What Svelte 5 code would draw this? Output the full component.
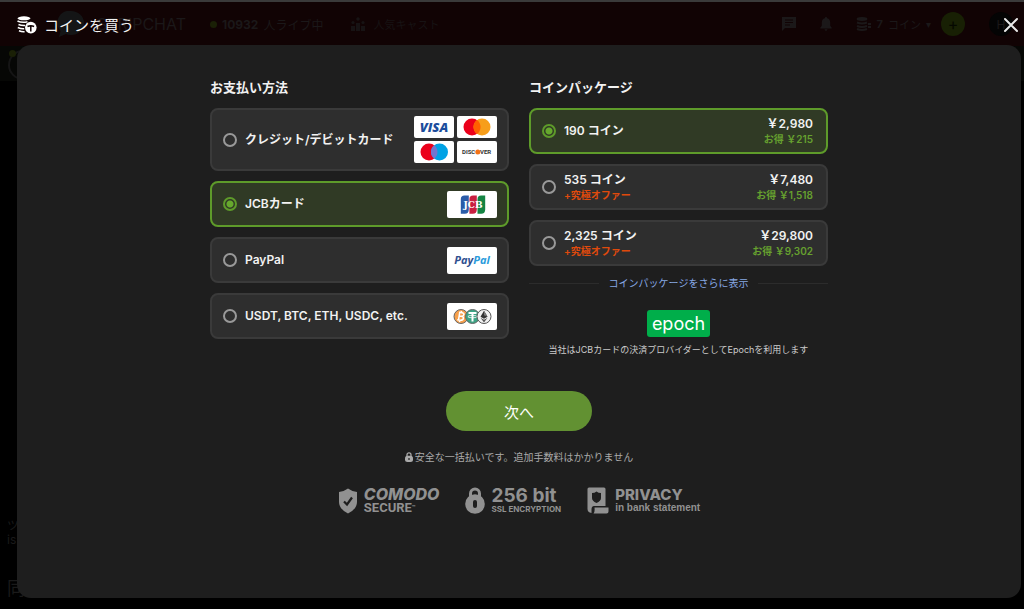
<script lang="ts">
  type Method = { id: string; label: string; logos: string[] };
  type Pack = { id: string; label: string; offer?: string; price: string; save: string };

  const methods: Method[] = [
    { id: "card", label: "クレジット/デビットカード", logos: ["visa", "mastercard", "maestro", "discover"] },
    { id: "jcb", label: "JCBカード", logos: ["jcb"] },
    { id: "paypal", label: "PayPal", logos: ["paypal"] },
    { id: "crypto", label: "USDT, BTC, ETH, USDC, etc.", logos: ["crypto"] },
  ];

  const packs: Pack[] = [
    { id: "190", label: "190 コイン", price: "￥2,980", save: "お得 ￥215" },
    { id: "535", label: "535 コイン", offer: "+究極オファー", price: "￥7,480", save: "お得 ￥1,518" },
    { id: "2325", label: "2,325 コイン", offer: "+究極オファー", price: "￥29,800", save: "お得 ￥9,302" },
  ];

  let method = $state("jcb");
  let pack = $state("190");
</script>

{#snippet logo(name: string)}
  {#if name === "visa"}
    <svg class="logo small" viewBox="0 0 40 22" role="img" aria-label="Visa">
      <text x="20" y="16" text-anchor="middle" class="visa">VISA</text>
    </svg>
  {:else if name === "mastercard"}
    <svg class="logo small" viewBox="0 0 40 22" role="img" aria-label="Mastercard">
      <circle cx="15" cy="11" r="8.5" fill="#eb001b" />
      <circle cx="25" cy="11" r="8.5" fill="#f79e1b" />
      <path d="M20 4.1a8.5 8.5 0 0 1 0 13.8a8.5 8.5 0 0 1 0-13.8z" fill="#ff5f00" />
    </svg>
  {:else if name === "maestro"}
    <svg class="logo small" viewBox="0 0 40 22" role="img" aria-label="Maestro">
      <circle cx="15" cy="11" r="8.5" fill="#eb001b" />
      <circle cx="25.5" cy="11" r="8.5" fill="#00a2e5" />
      <path d="M20.2 4.3a8.5 8.5 0 0 1 0 13.4a8.5 8.5 0 0 1 0-13.4z" fill="#7375cf" />
    </svg>
  {:else if name === "discover"}
    <svg class="logo small" viewBox="0 0 40 22" role="img" aria-label="Discover">
      <text x="5" y="13" class="discover">DISC</text>
      <circle cx="20.8" cy="11" r="2.5" fill="#f47216" />
      <text x="23" y="13" class="discover">VER</text>
    </svg>
  {:else if name === "jcb"}
    <svg class="logo" viewBox="0 0 50 27" role="img" aria-label="JCB">
      <path d="M17.5 4.5h4.3v14q0 4.2-4 4.2h-4v-14.500q0-3.700 3.700-3.700z" fill="#2a5ca8" />
      <path d="M26 4.5h3.800v14q0 4.2-4 4.2h-3.400v-14.500q0-3.700 3.600-3.700z" fill="#c81f40" />
      <path d="M34 4.5h4.200v14q0 4.2-4 4.2h-3.700v-14.500q0-3.700 3.500-3.700z" fill="#148443" />
      <text x="26" y="17" text-anchor="middle" class="jcb">JCB</text>
    </svg>
  {:else if name === "paypal"}
    <svg class="logo" viewBox="0 0 50 27" role="img" aria-label="PayPal">
      <text x="25" y="17" text-anchor="middle" class="paypal"
        ><tspan fill="#2f4f90">Pay</tspan><tspan fill="#2a9bdc">Pal</tspan></text>
    </svg>
  {:else}
    <svg class="logo" viewBox="0 0 50 27" role="img" aria-label="Bitcoin, Tether, Ethereum">
      <circle cx="14" cy="13.5" r="7" fill="#f7a04b" stroke="#666" />
      <path
        d="M12.8 9l-1.4 8.700M12 9.3l3.2.4q2 .4 1.7 2t-2.6 1.5l-2.2-.2M14.2 13.2q2.6.5 2.2 2.3t-3.2 1.7l-3-.4M14.5 7.8l-.3 1.7M12.8 17.3l-.3 1.9"
        fill="none" stroke="#fff" stroke-width="1.5" />
      <circle cx="25.5" cy="13.5" r="7" fill="#3ca384" stroke="#666" />
      <path d="M21.5 10h8M25.5 10v8.5" stroke="#fff" stroke-width="2" />
      <ellipse cx="25.5" cy="13.6" rx="4.6" ry="1.2" fill="none" stroke="#fff" stroke-width="0.8" />
      <circle cx="37" cy="13.5" r="7" fill="#f2f2f2" stroke="#555" />
      <path d="M37 7.8l-3.5 5.9l3.5 2l3.5-2z" fill="#333" />
      <path d="M33.5 14.7l3.5 4.7l3.5-4.7l-3.5 2z" fill="#555" />
      <path d="M37 7.8v4.5l3.5 1.4z" fill="#777" />
    </svg>
  {/if}
{/snippet}

<div class="page">
  <div class="site" aria-hidden="true">
    <div class="topbar">
      <svg class="brand-icon" viewBox="0 0 28 26">
        <path d="M14 0a13 12 0 0 1 0 24q-3 0-5-1l-7 3l1.500-6a12 12 0 0 1 10.500-20z" fill="#141516" />
      </svg>
      <span class="brand">STRIPCHAT</span>
      <span class="live"><i></i><b>10932</b> 人ライブ中</span>
      <span class="popular">
        <svg width="14" height="14" viewBox="0 0 14 14" fill="#171314">
          <path d="M0 9h4v5h-4zM5 6h4v8h-4zM10 9h4v5h-4z" />
          <circle cx="2" cy="5.5" r="1.6" /><circle cx="7" cy="2" r="1.8" /><circle cx="12" cy="5.5" r="1.6" />
        </svg>
        人気キャスト
      </span>
      <svg class="chat" width="14" height="14" viewBox="0 0 14 14">
        <path d="M0 0h14v11h-11l-3 3z" fill="#1b1819" />
        <path d="M3 3h8M3 5.5h8M3 8h5" stroke="#110304" />
      </svg>
      <svg class="bell" width="12" height="14" viewBox="0 0 12 14" fill="#1b1819">
        <path d="M6 0q1 0 1.2 1.2q3 .8 3 4.5v3l1.5 2v.8h-11.4v-.8l1.5-2v-3q0-3.7 3-4.5q.2-1.2 1.2-1.2zM4.5 12.3h3q-.3 1.5-1.5 1.5t-1.5-1.5z" />
      </svg>
      <span class="balance">
        <svg width="16" height="14" viewBox="0 0 16 14" fill="none" stroke="#1b1819" stroke-width="2">
          <path d="M1 2q5 2 10 0M1 2q5-2 10 0M1 5.5q5 2 10 0M1 9q5 2 10 0M1 12q5 2 10 0M12 7h3M12 10h3" />
        </svg>
        <b>7</b> コイン <small>▾</small>
      </span>
      <span class="add">+</span>
      <span class="avatar">H</span>
    </div>
    <div class="strip"><i class="online"></i><span class="ring"></span></div>
    <div class="below">
      <span>ツ</span>
      <span>is</span>
      <strong>同</strong>
    </div>
  </div>

  <div class="overlay">
    <header>
      <svg width="20" height="18" viewBox="0 0 20 18" fill="#fff" aria-hidden="true">
        <ellipse cx="7" cy="2.3" rx="6.5" ry="2" />
        <path d="M.5 5q4.5 2.2 10 .8" fill="none" stroke="#fff" stroke-width="1.5" />
        <path d="M1.5 8.5q3 1.3 6.5 1M.8 11.5q3 1.5 6.4 1.3M2 14.8q2.5 1.2 5.6 1" fill="none" stroke="#fff" stroke-width="1.5" />
        <circle cx="13.8" cy="11.6" r="5.8" />
        <path d="M10.5 10.5q3.3-1.6 6.6 0M13.8 10v5.5" fill="none" stroke="#110304" stroke-width="1.5" />
      </svg>
      <h1>コインを買う</h1>
      <button class="close" type="button" aria-label="閉じる">
        <svg width="16" height="16" viewBox="0 0 16 16" aria-hidden="true">
          <path d="M2 2l12 12M14 2l-12 12" stroke="#e8e8e8" stroke-width="2" stroke-linecap="round" />
        </svg>
      </button>
    </header>

    <main>
      <div class="columns">
        <section>
          <h2 id="methods">お支払い方法</h2>
          <div class="options" role="radiogroup" aria-labelledby="methods">
            {#each methods as m (m.id)}
              <label class="option" class:selected={method === m.id}>
                <input type="radio" name="method" value={m.id} bind:group={method} />
                <span class="name">{m.label}</span>
                <span class="logos" class:many={m.logos.length > 1}>
                  {#each m.logos as name}
                    {@render logo(name)}
                  {/each}
                </span>
              </label>
            {/each}
          </div>
        </section>

        <section>
          <h2 id="packs">コインパッケージ</h2>
          <div class="options" role="radiogroup" aria-labelledby="packs">
            {#each packs as p (p.id)}
              <label class="option" class:selected={pack === p.id}>
                <input type="radio" name="pack" value={p.id} bind:group={pack} />
                <span class="name">
                  {p.label}
                  {#if p.offer}<small class="offer">{p.offer}</small>{/if}
                </span>
                <span class="price">
                  {p.price}
                  <small class="save">{p.save}</small>
                </span>
              </label>
            {/each}
          </div>
          <div class="more"><a href="#packs">コインパッケージをさらに表示</a></div>
          <div class="provider">
            <span class="epoch">epoch</span>
            <p>当社はJCBカードの決済プロバイダーとしてEpochを利用します</p>
          </div>
        </section>
      </div>

      <button class="next" type="button">次へ</button>

      <p class="secure">
        <svg width="8" height="10" viewBox="0 0 8 10" aria-hidden="true">
          <path d="M2 5v-2.2a2 2 0 0 1 4 0v2.2" fill="none" stroke="#aaa" stroke-width="1.3" />
          <rect y="3.8" width="8" height="6.2" rx="2.5" fill="#aaa" />
          <path d="M4 6v2" stroke="#1e1e1e" stroke-width="1.2" />
        </svg>
        安全な一括払いです。追加手数料はかかりません
      </p>

      <ul class="badges">
        <li class="comodo">
          <svg width="20" height="26" viewBox="0 0 20 26" aria-hidden="true">
            <path d="M10 .5q4 3 9 3.5v10q0 7-9 11.5q-9-4.5-9-11.5v-10q5-.5 9-3.5z" fill="#919191" />
            <path d="M6 13.5l3 3l5-7" fill="none" stroke="#1e1e1e" stroke-width="2.2" />
          </svg>
          <div><b>COMODO</b><span>SECURE<sup>™</sup></span></div>
        </li>
        <li class="ssl">
          <svg width="20" height="27" viewBox="0 0 20 27" aria-hidden="true">
            <path d="M5.5 12v-5.500a4.5 4.5 0 0 1 9 0v5.500" fill="none" stroke="#919191" stroke-width="3" />
            <circle cx="10" cy="17" r="9.8" fill="#919191" />
            <rect x="8" y="13" width="4" height="8" rx="2" fill="#1e1e1e" />
          </svg>
          <div><b>256 bit</b><span>SSL ENCRYPTION</span></div>
        </li>
        <li class="privacy">
          <svg width="22" height="27" viewBox="0 0 22 27" aria-hidden="true">
            <path d="M2 .5h15q1.5 0 1.5 1.5v17h-11.5q-2.5 0-2.5 3.5v3.5q-4-.5-4-4v-20q0-1.500 1.500-1.500z" fill="#919191" />
            <path d="M9.500 4.500q2 1.500 4.500 1.500v5q0 3-4.500 5q-4.500-2-4.500-5v-5q2.500 0 4.500-1.500z" fill="#1e1e1e" />
            <path d="M7.500 20.500h14v4q0 2-2 2h-13q1.500-1 1-6z" fill="#919191" />
          </svg>
          <div><b>PRIVACY</b><span>in bank statement</span></div>
        </li>
      </ul>
    </main>
  </div>
</div>

<style>
  :global(body) {
    margin: 0;
    background: #000;
  }

  .page {
    display: grid;
    min-height: 100vh;
    font-family: Inter, "Noto Sans CJK JP", sans-serif;
    color: #f2f2f2;
  }

  .site,
  .overlay {
    grid-area: 1 / 1;
    min-width: 0;
    display: flex;
    flex-direction: column;
  }

  .site {
    color: #1b1819;
    font-size: 12px;
    overflow: hidden;
  }

  .topbar {
    display: flex;
    align-items: center;
    height: 44px;
    padding-left: 57px;
    border-top: 2px solid #3a3a3a;
    background: #110304;
    white-space: nowrap;
  }

  .brand-icon {
    width: 28px;
    height: 26px;
  }

  .brand {
    margin-left: 12px;
    font-size: 16px;
  }

  .live,
  .popular,
  .balance {
    display: flex;
    align-items: center;
    gap: 5px;
  }

  .live {
    margin-left: 24px;
  }

  .live i,
  .online {
    width: 7px;
    height: 7px;
    border-radius: 50%;
    background: #1a2006;
  }

  .popular {
    margin-left: 28px;
    gap: 8px;
    color: #171314;
    font-size: 11px;
  }

  .chat {
    margin-left: auto;
  }

  .bell {
    margin: 0 24px;
  }

  .balance {
    font-size: 11px;
  }

  .add,
  .avatar {
    display: grid;
    place-items: center;
    width: 24px;
    height: 24px;
    border-radius: 50%;
  }

  .add {
    margin: 0 24px 0 10px;
    background: #182004;
    color: #050800;
    font-size: 16px;
  }

  .avatar {
    margin-right: 11px;
    background: #040404;
  }

  .strip {
    position: relative;
    height: 35px;
    padding-left: 8px;
    background: #060705;
  }

  .online {
    position: absolute;
    top: 4px;
    left: 9px;
  }

  .ring {
    display: block;
    width: 26px;
    height: 26px;
    margin-top: 4px;
    border: 2px solid #151515;
    border-radius: 50%;
  }

  .below {
    display: flex;
    flex-direction: column;
    margin-top: auto;
    padding: 0 0 8px 7px;
    line-height: 14px;
    color: #1a1a1a;
  }

  .below strong {
    margin-top: 30px;
    font-size: 18px;
    font-weight: 400;
    line-height: 24px;
  }

  .overlay {
    position: relative;
    padding: 0 3px 11px 17px;
  }

  header {
    display: flex;
    align-items: center;
    gap: 7px;
    height: 45px;
    padding-top: 4px;
    box-sizing: border-box;
  }

  h1,
  h2,
  p {
    margin: 0;
  }

  h1 {
    font-size: 15px;
    font-weight: 400;
  }

  button {
    border: 0;
    font: inherit;
    cursor: pointer;
  }

  .close {
    display: grid;
    margin-left: auto;
    padding: 2px;
    background: none;
  }

  main {
    flex: 1;
    display: flex;
    flex-direction: column;
    align-items: center;
    padding: 32px 16px;
    border-radius: 14px;
    background: #1e1e1e;
  }

  .columns {
    display: grid;
    grid-template-columns: 1fr 1fr;
    gap: 20px;
    width: 100%;
    max-width: 618px;
  }

  h2 {
    margin-bottom: 11px;
    font-size: 13px;
    font-weight: 700;
    line-height: 20px;
  }

  .options {
    display: grid;
    gap: 10px;
  }

  .option {
    display: flex;
    align-items: center;
    gap: 8px;
    min-height: 46px;
    padding: 0 10px 0 11px;
    box-sizing: border-box;
    border: 2px solid #3a3a3a;
    border-radius: 8px;
    background: #2e2e2e;
    font-size: 12px;
    font-weight: 600;
    line-height: 16px;
    cursor: pointer;
  }

  .option.selected {
    border-color: #5e9b2a;
    background: #303a25;
  }

  input {
    appearance: none;
    flex: none;
    width: 14px;
    height: 14px;
    margin: 0;
    border: 2px solid #999;
    border-radius: 50%;
  }

  input:checked {
    border-color: #5e9b2a;
    background: radial-gradient(circle, #66a82d 3px, transparent 4px);
  }

  .name {
    flex: 1;
  }

  small {
    display: block;
    font-size: 10px;
    line-height: 14px;
  }

  .offer {
    color: #e04a0c;
  }

  .price {
    padding-right: 3px;
    text-align: right;
  }

  .save {
    color: #66a02f;
  }

  .logos {
    display: grid;
  }

  .logos.many {
    grid-template-columns: auto auto;
    gap: 3px;
    padding: 6px 0;
  }

  .logo {
    width: 50px;
    height: 27px;
    border-radius: 2px;
    background: #fff;
  }

  .logo.small {
    width: 40px;
    height: 22px;
  }

  .visa {
    font: italic 800 13px "Open Sans", sans-serif;
    fill: #1c4d9d;
  }

  .discover {
    font: 700 6px Roboto, sans-serif;
    fill: #333;
  }

  .jcb {
    font: 700 9px "DejaVu Serif", serif;
    fill: #fff;
  }

  .paypal {
    font: italic 700 11px "Open Sans", sans-serif;
  }

  .more {
    display: flex;
    align-items: center;
    gap: 10px;
    margin-top: 9px;
    font-size: 10px;
    line-height: 16px;
  }

  .more::before,
  .more::after {
    content: "";
    flex: 1;
    height: 1px;
    background: #2c2c2c;
  }

  .more a {
    color: #87a9e6;
    text-decoration: none;
  }

  .provider {
    display: flex;
    flex-direction: column;
    align-items: center;
    gap: 6px;
    margin-top: 19px;
    font-size: 9px;
    line-height: 14px;
    color: #ccc;
  }

  .epoch {
    padding: 0 5px;
    border-radius: 3px;
    background: #00ae4a;
    color: #fff;
    font-size: 18px;
    line-height: 27px;
  }

  .next {
    width: 146px;
    height: 40px;
    margin-top: 34px;
    border-radius: 20px;
    background: #629132;
    color: #fff;
    font-size: 15px;
  }

  .secure {
    display: flex;
    align-items: center;
    gap: 2px;
    margin-top: 18px;
    font-size: 10px;
    line-height: 16px;
    color: #aaa;
  }

  .badges {
    display: flex;
    flex-wrap: wrap;
    justify-content: center;
    gap: 26px;
    margin: 22px 0 0;
    padding: 0;
    list-style: none;
    color: #919191;
  }

  .badges li {
    display: flex;
    align-items: center;
    gap: 6px;
  }

  .badges b,
  .badges span {
    display: block;
  }

  .comodo b {
    font-size: 16px;
    font-style: italic;
    font-weight: 800;
    line-height: 14px;
  }

  .comodo span {
    font: 700 13px/13px Roboto, sans-serif;
  }

  sup {
    font-size: 6px;
    line-height: 0;
    vertical-align: 3px;
  }

  .ssl b {
    font-size: 19px;
    line-height: 18px;
  }

  .ssl span {
    font-size: 8px;
    font-weight: 700;
    line-height: 9px;
  }

  .privacy b {
    font-size: 15px;
    font-weight: 800;
    line-height: 14px;
  }

  .privacy span {
    font: 700 10px/11px "Liberation Sans", sans-serif;
  }
</style>
